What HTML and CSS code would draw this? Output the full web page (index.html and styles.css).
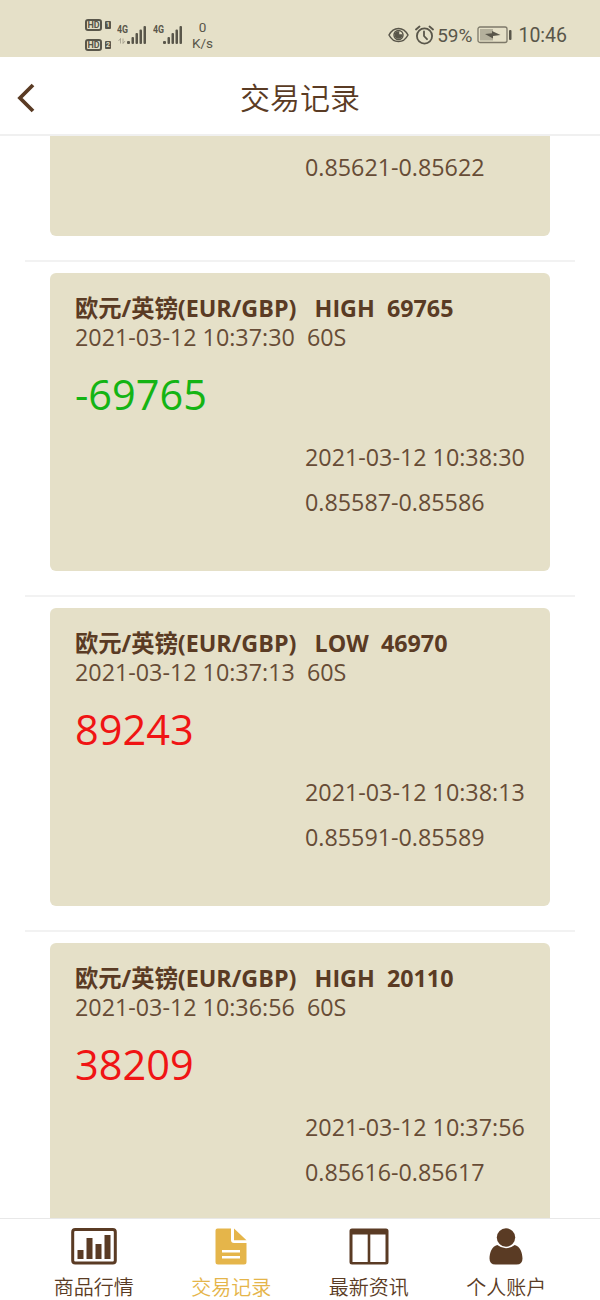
FILE: index.html
```html
<!DOCTYPE html>
<html lang="zh-CN">
<head>
    <meta charset="UTF-8">
    <meta name="viewport" content="width=device-width, initial-scale=1.0">
    <title>交易记录</title>
    <link rel="stylesheet" href="styles.css">
</head>
<body>
    <div class="status-bar">
        <div class="status-left">
            <div class="hd-group">
                <div class="hd"><span class="hd-badge">HD</span><span class="hd-sim">1</span></div>
                <div class="hd"><span class="hd-badge">HD</span><span class="hd-sim">2</span></div>
            </div>
            <div class="signal">
                <span class="signal-type">4G</span>
                <svg width="30" height="20" viewBox="0 0 30 20" fill="currentColor">
                    <path d="M3.500 18.500v-5L1.500 16M6 13.500v5l2-2.500" stroke="currentColor" fill="none" opacity="0.4"/>
                    <rect x="10" y="16" width="3" height="3" rx="1"/>
                    <rect x="14.500" y="12" width="2.500" height="7" rx="1"/>
                    <rect x="18.500" y="8" width="2.500" height="11" rx="1"/>
                    <rect x="22.500" y="4.500" width="2.500" height="14.500" rx="1"/>
                    <rect x="26.500" y="1" width="2.500" height="18" rx="1"/>
                </svg>
            </div>
            <div class="signal">
                <span class="signal-type">4G</span>
                <svg width="30" height="20" viewBox="0 0 30 20" fill="currentColor">
                    <rect x="10" y="16" width="3" height="3" rx="1"/>
                    <rect x="14.500" y="12" width="2.500" height="7" rx="1"/>
                    <rect x="18.500" y="8" width="2.500" height="11" rx="1"/>
                    <rect x="22.500" y="4.500" width="2.500" height="14.500" rx="1"/>
                    <rect x="26.500" y="1" width="2.500" height="18" rx="1"/>
                </svg>
            </div>
            <div class="net-speed">0<br>K/s</div>
        </div>
        <div class="status-right">
            <svg class="icon-eye" width="21" height="18" viewBox="0 0 21 18" fill="none" stroke="currentColor" stroke-width="1.500">
                <path d="M1 9C5.500 0.200 15.500 0.200 20 9C15.500 17.800 5.500 17.800 1 9Z"/>
                <circle cx="10.500" cy="9" r="4.500"/>
                <path d="M10.500 6a3 3 0 1 0 3 3h-3z" fill="currentColor"/>
            </svg>
            <svg class="icon-alarm" width="19" height="20" viewBox="0 0 19 20" fill="none" stroke="currentColor" stroke-width="1.800" stroke-linecap="round">
                <circle cx="9.500" cy="11" r="7.600"/>
                <path d="M9 6.500V11l3 3.200M1 4.500L4.500 1.500M18 4.500L14.500 1.500"/>
            </svg>
            <span class="battery-text">59%</span>
            <svg class="icon-battery" width="35" height="18" viewBox="0 0 35 18">
                <rect x="1" y="1" width="29" height="15.500" rx="2" fill="none" stroke="currentColor" stroke-width="1.300" opacity="0.75"/>
                <rect x="3" y="3" width="13" height="11.500" fill="currentColor" opacity="0.35"/>
                <path d="M8 8l7-0.800V5l8.500 4-7.500 1v2.500z" fill="currentColor"/>
                <rect x="32" y="4" width="2.500" height="10" rx="1" fill="currentColor"/>
            </svg>
            <span class="clock">10:46</span>
        </div>
    </div>

    <header class="header">
        <svg class="back" width="20" height="30" viewBox="0 0 20 30" fill="none" stroke="currentColor" stroke-width="3.800">
            <path d="M17 2L4 15l13 13"/>
        </svg>
        <h1>交易记录</h1>
    </header>

    <main class="list">
        <div class="item item-first">
            <div class="card">
                <div class="result">
                    <p>0.85621-0.85622</p>
                </div>
            </div>
        </div>
        <div class="item">
            <div class="card">
                <h2>欧元/英镑(EUR/GBP)&nbsp;&nbsp; HIGH&nbsp; 69765</h2>
                <p class="time">2021-03-12 10:37:30&nbsp; 60S</p>
                <div class="profit down">-69765</div>
                <div class="result">
                    <p>2021-03-12 10:38:30</p>
                    <p>0.85587-0.85586</p>
                </div>
            </div>
        </div>
        <div class="item">
            <div class="card">
                <h2>欧元/英镑(EUR/GBP)&nbsp;&nbsp; LOW&nbsp; 46970</h2>
                <p class="time">2021-03-12 10:37:13&nbsp; 60S</p>
                <div class="profit up">89243</div>
                <div class="result">
                    <p>2021-03-12 10:38:13</p>
                    <p>0.85591-0.85589</p>
                </div>
            </div>
        </div>
        <div class="item">
            <div class="card">
                <h2>欧元/英镑(EUR/GBP)&nbsp;&nbsp; HIGH&nbsp; 20110</h2>
                <p class="time">2021-03-12 10:36:56&nbsp; 60S</p>
                <div class="profit up">38209</div>
                <div class="result">
                    <p>2021-03-12 10:37:56</p>
                    <p>0.85616-0.85617</p>
                </div>
            </div>
        </div>
    </main>

    <nav class="tab-bar">
        <a class="tab">
            <svg width="46" height="37" viewBox="0 0 46 37" fill="currentColor">
                <rect x="1.700" y="1.500" width="42.600" height="33.500" rx="2.500" fill="none" stroke="currentColor" stroke-width="3"/>
                <rect x="6.500" y="22" width="6" height="9"/>
                <rect x="15.500" y="10" width="6" height="21"/>
                <rect x="24.500" y="16" width="6" height="15"/>
                <rect x="33.500" y="7" width="6" height="24"/>
            </svg>
            <span>商品行情</span>
        </a>
        <a class="tab active">
            <svg width="32" height="37" viewBox="0 0 32 37" fill="currentColor">
                <path d="M2.500 0.500H16V12q0 3 3 3H31.500V34q0 2.500-2.500 2.500H3Q0.500 36.500 0.500 34V2.500Q0.500 0.500 2.500 0.500Z"/>
                <path d="M19 0.500L31.500 12.300H19Z"/>
                <path d="M7 23.300h18M7 29.300h18" stroke="#fff" stroke-width="2.600"/>
            </svg>
            <span>交易记录</span>
        </a>
        <a class="tab">
            <svg width="40" height="37" viewBox="0 0 40 37" fill="currentColor">
                <path fill-rule="evenodd" d="M3 0.500H37Q39.500 0.500 39.500 3V34Q39.500 36.500 37 36.500H3Q0.500 36.500 0.500 34V3Q0.500 0.500 3 0.500ZM3.500 6.500V34H18.700V6.500ZM21.300 6.500V34H36.500V6.500Z"/>
            </svg>
            <span>最新资讯</span>
        </a>
        <a class="tab">
            <svg width="34" height="37" viewBox="0 0 34 37" fill="currentColor">
                <circle cx="17" cy="9.500" r="9.200"/>
                <path d="M8.300 17Q17 23.500 25.700 17C31 18 33.500 25 33.500 30.500Q33.500 36.500 27.500 36.500H6.500Q0.500 36.500 0.500 30.500C0.500 25 3 18 8.300 17Z"/>
            </svg>
            <span>个人账户</span>
        </a>
    </nav>
</body>
</html>
```
FILE: styles.css
```css
:root {
    --brown: #5a3b24;
    --text-brown: #674c36;
    --beige: #e5e0c8;
    --gold: #e5b54a;
    --status-color: #59564a;
}

* {
    margin: 0;
    padding: 0;
    box-sizing: border-box;
}

body {
    font-family: "Open Sans", "Noto Sans CJK SC", sans-serif;
    background-color: #fff;
    color: var(--brown);
    display: flex;
    flex-direction: column;
    height: 100vh;
    overflow: hidden;
}

svg {
    display: block;
    flex-shrink: 0;
}

/* 状态栏 */
.status-bar {
    height: 57px;
    flex-shrink: 0;
    display: flex;
    justify-content: space-between;
    padding: 14px 33px 0 85px;
    background-color: var(--beige);
    color: var(--status-color);
    font-family: Roboto, sans-serif;
}

.status-left,
.status-right {
    display: flex;
    align-items: center;
    height: 42px;
}

.hd-group {
    display: flex;
    flex-direction: column;
    gap: 8px;
    margin-right: 6px;
}

.hd {
    display: flex;
    align-items: center;
    gap: 3px;
}

.hd-badge {
    width: 17px;
    height: 12px;
    border: 2px solid var(--status-color);
    border-radius: 3px;
    font-size: 9px;
    font-weight: 700;
    line-height: 8px;
    text-align: center;
}

.hd-sim {
    width: 6px;
    height: 8px;
    border-radius: 1px;
    background-color: var(--status-color);
    color: var(--beige);
    font-size: 7px;
    font-weight: 700;
    line-height: 8px;
    text-align: center;
}

.signal {
    display: flex;
    position: relative;
    margin-right: 6px;
}

.signal-type {
    position: absolute;
    top: -1px;
    left: 0;
    font-size: 11px;
    font-weight: 700;
    line-height: 11px;
    transform: scaleX(0.8);
    transform-origin: left;
}

.net-speed {
    margin-left: 3px;
    font-size: 13.5px;
    line-height: 16px;
    text-align: center;
}

.icon-eye {
    margin-right: 6px;
}

.icon-alarm {
    margin-right: 3px;
}

.battery-text,
.clock {
    padding-top: 2px;
    font-size: 19.5px;
    line-height: 24px;
}

.battery-text {
    font-size: 19px;
}

.icon-battery {
    margin: 0 6px 0 5px;
}

/* 顶部导航 */
.header {
    height: 79px;
    flex-shrink: 0;
    display: grid;
    grid-template-columns: 60px 1fr 60px;
    align-items: center;
    padding-top: 5px;
    border-bottom: 2px solid #f0f0f0;
}

.back {
    margin-left: 16px;
}

.header h1 {
    font-size: 30px;
    font-weight: 350;
    line-height: 44px;
    text-align: center;
}

/* 交易列表 */
.list {
    flex: 1;
    min-height: 0;
    overflow: hidden;
    padding: 0 25px;
}

.item {
    height: 335px;
    padding: 10.5px 25px 25px;
    border-bottom: 2px solid #f2f2f2;
}

.card {
    height: 298.5px;
    padding: 21px 25px 0;
    border-radius: 6px;
    background-color: var(--beige);
}

.item-first {
    height: 126px;
    padding-top: 0;
}

.item-first .card {
    height: 100px;
    padding-top: 9px;
    border-radius: 0 0 6px 6px;
}

.card h2 {
    font-size: 23.3px;
    font-weight: 700;
    line-height: 29px;
    white-space: nowrap;
}

.time {
    color: var(--text-brown);
    font-size: 23.3px;
    line-height: 29px;
}

.profit {
    margin-top: 13px;
    font-size: 41.5px;
    line-height: 58px;
}

.up {
    color: #f01414;
}

.down {
    color: #14b414;
}

.result {
    width: 220px;
    margin: 12px 0 0 auto;
    color: var(--text-brown);
    font-size: 23.3px;
    line-height: 45px;
    white-space: nowrap;
}

.item-first .result {
    margin-top: 0;
}

/* 底部标签栏 */
.tab-bar {
    height: 82px;
    flex-shrink: 0;
    display: flex;
    padding: 0 25px;
    border-top: 1px solid #e8e8e8;
}

.tab {
    flex: 1;
    display: flex;
    flex-direction: column;
    align-items: center;
    padding-top: 9px;
    font-size: 20px;
    font-weight: 350;
    line-height: 30px;
}

.tab span {
    margin-top: 8px;
}

.tab.active {
    color: var(--gold);
}
```
